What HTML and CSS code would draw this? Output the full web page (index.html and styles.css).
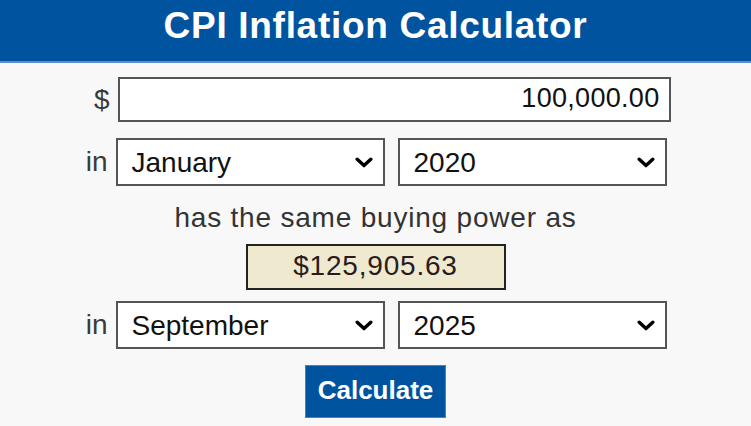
FILE: index.html
```html
<!DOCTYPE html>
<html lang="en">
<head>
<meta charset="utf-8">
<title>CPI Inflation Calculator</title>
<link rel="stylesheet" href="styles.css">
</head>
<body>
<header class="top">
  <h1 class="title">CPI Inflation Calculator</h1>
</header>
<main class="calc">
  <div class="row">
    <span class="lbl">$</span>
    <input class="amount" type="text" value="100,000.00">
  </div>
  <div class="row row-sel">
    <span class="lbl">in</span>
    <select class="sel">
      <option>January</option>
    </select>
    <select class="sel sel-year">
      <option>2020</option>
    </select>
  </div>
  <p class="same">has the same buying power as</p>
  <div class="result-wrap">
    <div class="result">$125,905.63</div>
  </div>
  <div class="row row-sel row-sel2">
    <span class="lbl">in</span>
    <select class="sel">
      <option>September</option>
    </select>
    <select class="sel sel-year">
      <option>2025</option>
    </select>
  </div>
  <div class="btn-wrap">
    <button class="calc-btn" type="button">Calculate</button>
  </div>
</main>
</body>
</html>
```
FILE: styles.css
```css
body {
  margin: 0;
  background: #f8f8f8;
  font-family: "Liberation Sans", Arial, sans-serif;
  color: #333;
}

.top {
  height: 61px;
  background: #00549f;
  border-bottom: 2px solid #5b8fcc;
  display: flex;
  justify-content: center;
}

.title {
  margin: 0;
  padding-top: 8px;
  color: #fff;
  font-size: 37px;
  line-height: 36px;
  font-weight: bold;
  letter-spacing: 0.7px;
}

.calc {
  width: 592px;
  margin: 14px auto 0;
  display: flex;
  flex-direction: column;
}

.row {
  display: flex;
  align-items: center;
  gap: 8px;
}

.lbl {
  width: 30px;
  text-align: right;
  font-size: 28px;
  color: #3a3a3a;
}

.amount {
  width: 553px;
  height: 45px;
  box-sizing: border-box;
  border: 2px solid #555;
  border-radius: 0;
  background: #fff;
  font-family: "Liberation Sans", Arial, sans-serif;
  font-size: 27px;
  letter-spacing: 0.3px;
  color: #111;
  text-align: right;
  padding: 0 9px 2px;
  outline: none;
}

.row-sel {
  margin-top: 16px;
  margin-left: -2px;
}

.row-sel2 {
  margin-top: 11px;
}

.sel {
  appearance: none;
  -webkit-appearance: none;
  width: 269px;
  height: 48px;
  box-sizing: border-box;
  border: 2px solid #555;
  border-radius: 0;
  background: #fff url("data:image/svg+xml,%3Csvg xmlns='http://www.w3.org/2000/svg' viewBox='0 0 18 11'%3E%3Cpath d='M2.2 2.2 L9 8.6 L15.8 2.2' fill='none' stroke='%23000' stroke-width='3.4' stroke-linecap='round' stroke-linejoin='round'/%3E%3C/svg%3E") no-repeat right 10px center / 18px 11px;
  font-family: "Liberation Sans", Arial, sans-serif;
  font-size: 28px;
  color: #111;
  padding: 0 40px 0 14px;
  outline: none;
}

.sel-year {
  margin-left: 5px;
}

.same {
  margin: 15px 0 0;
  text-align: center;
  font-size: 28px;
  line-height: 34px;
  letter-spacing: 0.8px;
  color: #333;
}

.result-wrap {
  display: flex;
  justify-content: center;
  margin-top: 9px;
}

.result {
  width: 260px;
  height: 46px;
  box-sizing: border-box;
  border: 2px solid #222;
  background: #efe9d0;
  display: flex;
  align-items: center;
  justify-content: center;
  padding-bottom: 3px;
  font-size: 28px;
  letter-spacing: 0.8px;
  color: #2a1c1c;
}

.btn-wrap {
  display: flex;
  justify-content: center;
  margin-top: 16px;
}

.calc-btn {
  width: 141px;
  height: 53px;
  box-sizing: border-box;
  background: #00549f;
  border: 1px solid #4a80bd;
  border-radius: 0;
  color: #fff;
  font-family: "Liberation Sans", Arial, sans-serif;
  font-size: 26px;
  font-weight: bold;
  padding: 0 0 3px;
}
```
